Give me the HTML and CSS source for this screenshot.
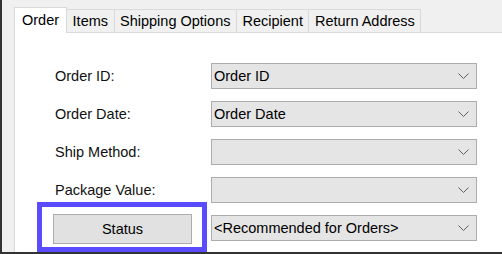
FILE: index.html
```html
<!DOCTYPE html>
<html>
<head>
<meta charset="utf-8">
<link rel="stylesheet" href="styles.css">
</head>
<body>
<div class="window">
  <div class="tabs">
    <div class="tab active">Order</div>
    <div class="tab">Items</div>
    <div class="tab">Shipping Options</div>
    <div class="tab">Recipient</div>
    <div class="tab">Return Address</div>
  </div>
  <div class="panel">
    <div class="row">
      <div class="label">Order ID:</div>
      <div class="combo"><span>Order ID</span><svg class="chev" width="11" height="6" viewBox="0 0 11 6"><polyline points="0.5,0.5 5.5,5.5 10.5,0.5" fill="none" stroke="#606060" stroke-width="1"/></svg></div>
    </div>
    <div class="row">
      <div class="label">Order Date:</div>
      <div class="combo"><span>Order Date</span><svg class="chev" width="11" height="6" viewBox="0 0 11 6"><polyline points="0.5,0.5 5.5,5.5 10.5,0.5" fill="none" stroke="#606060" stroke-width="1"/></svg></div>
    </div>
    <div class="row">
      <div class="label">Ship Method:</div>
      <div class="combo"><span></span><svg class="chev" width="11" height="6" viewBox="0 0 11 6"><polyline points="0.5,0.5 5.5,5.5 10.5,0.5" fill="none" stroke="#606060" stroke-width="1"/></svg></div>
    </div>
    <div class="row">
      <div class="label">Package Value:</div>
      <div class="combo"><span></span><svg class="chev" width="11" height="6" viewBox="0 0 11 6"><polyline points="0.5,0.5 5.5,5.5 10.5,0.5" fill="none" stroke="#606060" stroke-width="1"/></svg></div>
    </div>
    <div class="row">
      <div class="status-box"><div class="button">Status</div></div>
      <div class="combo"><span>&lt;Recommended for Orders&gt;</span><svg class="chev" width="11" height="6" viewBox="0 0 11 6"><polyline points="0.5,0.5 5.5,5.5 10.5,0.5" fill="none" stroke="#606060" stroke-width="1"/></svg></div>
    </div>
  </div>
</div>
</body>
</html>
```
FILE: styles.css
```css
* { box-sizing: border-box; }
html, body { margin: 0; padding: 0; }
body {
  width: 502px;
  height: 254px;
  overflow: hidden;
  font-family: "Liberation Sans", Arial, sans-serif;
  font-size: 14.5px;
  color: #000;
  background: #f0f0f0;
}
.window {
  height: 254px;
  display: flex;
  flex-direction: column;
  border-left: 2px solid #333;
  border-bottom: 2px solid #333;
  padding: 7px 0 0 12px;
  background: #f0f0f0;
}
.tabs {
  display: flex;
  align-items: flex-end;
  height: 25px;
  flex: none;
  position: relative;
  z-index: 1;
}
.tab {
  height: 23px;
  padding: 0 5.5px;
  border-top: 1px solid #d9d9d9;
  border-left: 1px solid #d9d9d9;
  display: flex;
  align-items: center;
  background: #f0f0f0;
  white-space: nowrap;
  color: #000;
}
.tab:last-child { border-right: 1px solid #d9d9d9; }
.tab.active {
  height: 26px;
  margin-bottom: -1px;
  padding: 0 7px 2px 7px;
  background: #fff;
  border-right: 1px solid #d9d9d9;
}
.tab.active + .tab { border-left: none; }
.panel {
  flex: 1;
  background: #fff;
  border-top: 1px solid #d9d9d9;
  border-left: 1px solid #d9d9d9;
  padding: 30px 0 0 22px;
  display: flex;
  flex-direction: column;
  gap: 12px;
}
.row {
  display: flex;
  align-items: center;
  height: 26px;
  flex: none;
}
.label {
  width: 174px;
  padding-left: 18px;
  color: #111;
}
.combo {
  width: 266px;
  height: 26px;
  border: 1px solid #acacac;
  background: #e5e5e5;
  display: flex;
  align-items: center;
  justify-content: space-between;
  padding: 0 7px 0 2px;
}
.chev { display: block; }
.status-box {
  width: 170px;
  height: 50px;
  border: 5px solid #5a4bff;
  margin: 0 4px 2px 0;
  padding: 7px 10px 3px 11px;
  background: #fff;
}
.button {
  width: 139px;
  height: 30px;
  background: #e1e1e1;
  border: 1px solid #adadad;
  display: flex;
  align-items: center;
  justify-content: center;
}
```
